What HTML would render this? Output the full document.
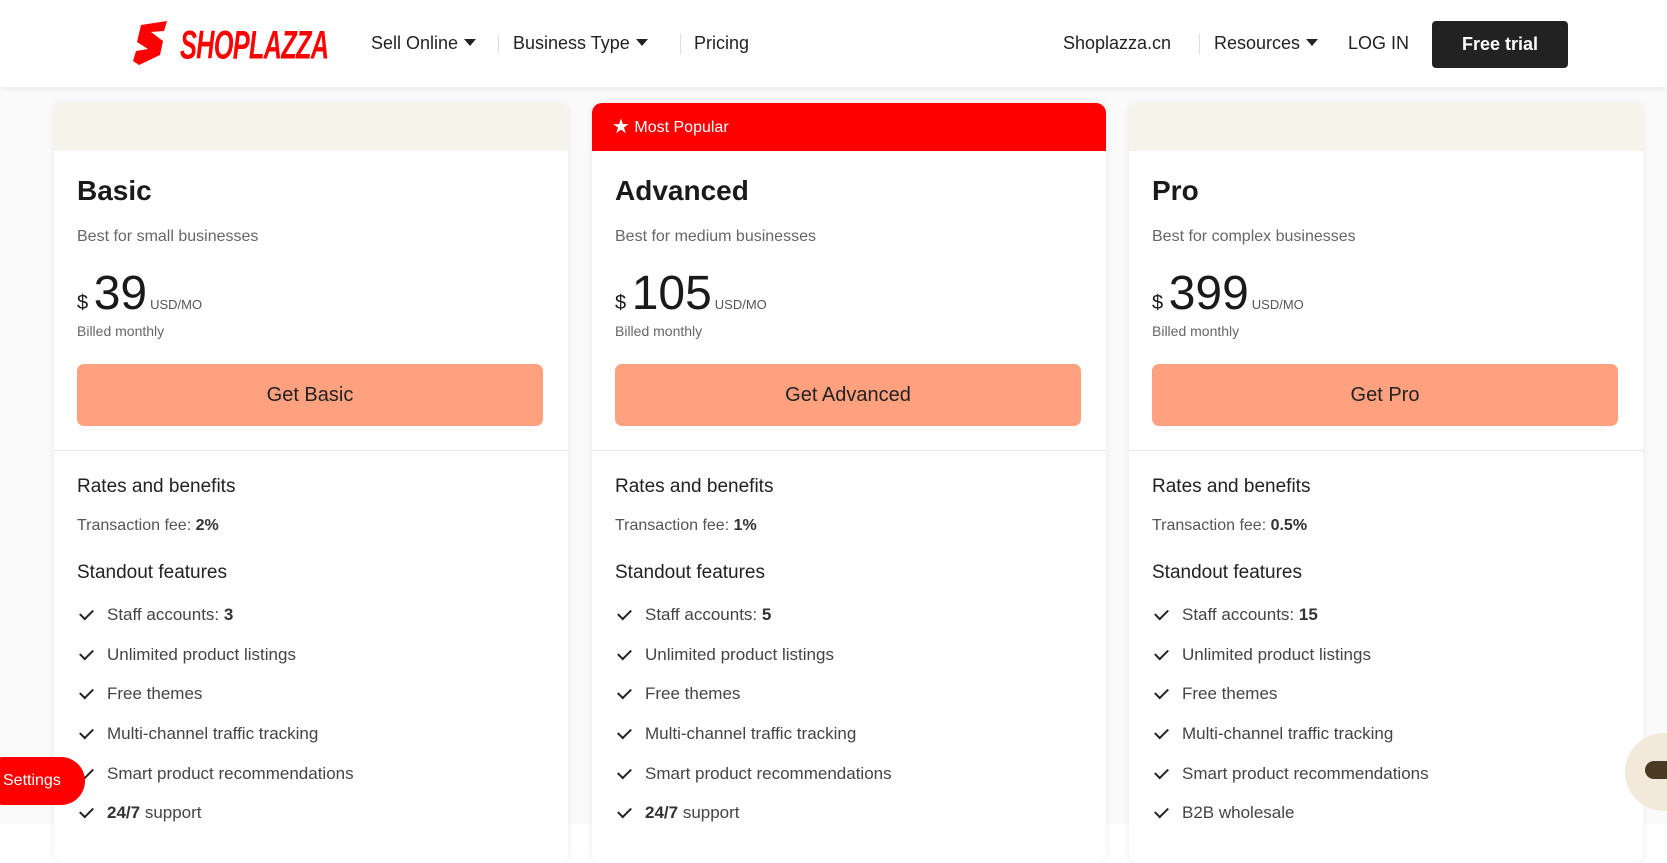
<!DOCTYPE html>
<html><head><meta charset="utf-8"><style>
*{margin:0;padding:0;box-sizing:border-box}
body{width:1667px;height:824px;overflow:hidden;background:#fff;font-family:"Liberation Sans",sans-serif;color:#222;position:relative}
.hdr{position:absolute;left:0;top:0;width:1667px;height:87px;background:#fff;box-shadow:0 2px 6px rgba(0,0,0,.06);z-index:2}
.bg{position:absolute;left:0;top:87px;width:1667px;height:737px;background:#fafafb}
.nav{position:absolute;top:33px;font-size:18px;color:#222;white-space:nowrap}
.tri{display:inline-block;width:0;height:0;border-left:6px solid transparent;border-right:6px solid transparent;border-top:7px solid #222;margin-left:6px;vertical-align:3px}
.sep{position:absolute;top:34px;width:1px;height:20px;background:#ddd}
.btn{position:absolute;left:1432px;top:21px;width:136px;height:47px;background:#222;color:#fff;border-radius:4px;font-weight:bold;font-size:18px;text-align:center;line-height:47px}
.card{position:absolute;top:103px;width:514px;height:760px;background:#fff;border-radius:10px;box-shadow:0 0 8px rgba(0,0,0,.08);overflow:hidden}
.band{height:48px;background:#f6f3ea}
.card .t{position:absolute;left:23px;top:72px;font-size:28px;font-weight:bold;color:#1a1a1a}
.card .s{position:absolute;left:23px;top:125px;font-size:16px;color:#666}
.card .p{position:absolute;left:23px;top:163px;white-space:nowrap;color:#1a1a1a}
.p .d{font-size:20px}.p .n{font-size:48px}.p .u{font-size:13px;color:#555;margin-left:3px}
.card .bm{position:absolute;left:23px;top:220px;font-size:14px;color:#666}
.card .b{position:absolute;left:23px;top:261px;width:466px;height:62px;background:#ffa07f;border-radius:7px;text-align:center;line-height:62px;font-size:20px;color:#222}
.card .hr{position:absolute;left:0;top:347px;width:100%;height:1px;background:#e6e6e6}
.h{position:absolute;left:23px;font-size:19px;color:#222}
.tf{position:absolute;left:23px;top:414px;font-size:16px;color:#555}
.tf b{color:#333}
.li{position:absolute;left:23px;font-size:17px;color:#444;white-space:nowrap}
.li b{color:#333}
.li:before{content:"";display:inline-block;width:11px;height:6px;border-left:2px solid #222;border-bottom:2px solid #222;transform:rotate(-45deg);margin:0 14px 5px 3px;vertical-align:middle}
</style></head><body>
<div class="bg"></div>
<div class="hdr">
<svg style="position:absolute;left:133px;top:21px" width="36" height="44" viewBox="0 0 36 44"><path d="M8 4 L34 0 L31 10 L18 11 L30 20 L27 34 L6 44 L0 40 L3 30 L15 28 L4 21 Z" fill="#ff0000"/></svg>
<div style="position:absolute;left:180px;top:22px;font-size:33px;font-weight:bold;font-style:italic;color:#ff0000;letter-spacing:-1px;transform:scale(0.77,1.22);transform-origin:top left">SHOPLAZZA</div>
<div class="nav" style="left:371px">Sell Online<span class="tri"></span></div>
<div class="sep" style="left:498px"></div>
<div class="nav" style="left:513px">Business Type<span class="tri"></span></div>
<div class="sep" style="left:680px"></div>
<div class="nav" style="left:694px">Pricing</div>
<div class="nav" style="left:1063px">Shoplazza.cn</div>
<div class="sep" style="left:1199px"></div>
<div class="nav" style="left:1214px">Resources<span class="tri"></span></div>
<div class="nav" style="left:1348px">LOG IN</div>
<div class="btn">Free trial</div>
</div>

<div class="card" style="left:54px"><div class="band"></div>
<div class="t">Basic</div><div class="s">Best for small businesses</div>
<div class="p"><span class="d">$ </span><span class="n">39</span><span class="u">USD/MO</span></div>
<div class="bm">Billed monthly</div><div class="b">Get Basic</div><div class="hr"></div>
<div class="h" style="top:373px">Rates and benefits</div>
<div class="tf">Transaction fee: <b>2%</b></div>
<div class="h" style="top:459px">Standout features</div>
<div class="li" style="top:502px">Staff accounts: <b>3</b></div>
<div class="li" style="top:542px">Unlimited product listings</div>
<div class="li" style="top:581px">Free themes</div>
<div class="li" style="top:621px">Multi-channel traffic tracking</div>
<div class="li" style="top:661px">Smart product recommendations</div>
<div class="li" style="top:700px"><b>24/7</b> support</div>
</div>

<div class="card" style="left:592px"><div class="band" style="background:#ff0000;color:#fff;font-size:16px;line-height:48px;padding-left:20px"><span style="font-size:20px;vertical-align:-1px">★</span> Most Popular</div>
<div class="t">Advanced</div><div class="s">Best for medium businesses</div>
<div class="p"><span class="d">$ </span><span class="n">105</span><span class="u">USD/MO</span></div>
<div class="bm">Billed monthly</div><div class="b">Get Advanced</div><div class="hr"></div>
<div class="h" style="top:373px">Rates and benefits</div>
<div class="tf">Transaction fee: <b>1%</b></div>
<div class="h" style="top:459px">Standout features</div>
<div class="li" style="top:502px">Staff accounts: <b>5</b></div>
<div class="li" style="top:542px">Unlimited product listings</div>
<div class="li" style="top:581px">Free themes</div>
<div class="li" style="top:621px">Multi-channel traffic tracking</div>
<div class="li" style="top:661px">Smart product recommendations</div>
<div class="li" style="top:700px"><b>24/7</b> support</div>
</div>

<div class="card" style="left:1129px"><div class="band"></div>
<div class="t">Pro</div><div class="s">Best for complex businesses</div>
<div class="p"><span class="d">$ </span><span class="n">399</span><span class="u">USD/MO</span></div>
<div class="bm">Billed monthly</div><div class="b">Get Pro</div><div class="hr"></div>
<div class="h" style="top:373px">Rates and benefits</div>
<div class="tf">Transaction fee: <b>0.5%</b></div>
<div class="h" style="top:459px">Standout features</div>
<div class="li" style="top:502px">Staff accounts: <b>15</b></div>
<div class="li" style="top:542px">Unlimited product listings</div>
<div class="li" style="top:581px">Free themes</div>
<div class="li" style="top:621px">Multi-channel traffic tracking</div>
<div class="li" style="top:661px">Smart product recommendations</div>
<div class="li" style="top:700px">B2B wholesale</div>
</div>

<div style="position:absolute;left:-20px;top:757px;width:105px;height:48px;background:#ff0000;border-radius:24px;color:#fff;font-size:16px;line-height:48px;padding-left:23px">Settings</div>
<div style="position:absolute;left:1625px;top:733px;width:80px;height:78px;border-radius:40px;background:#f3e9da"></div>
<div style="position:absolute;left:1645px;top:761px;width:40px;height:18px;border-radius:9px;background:#4a3a23"></div>
</body></html>
